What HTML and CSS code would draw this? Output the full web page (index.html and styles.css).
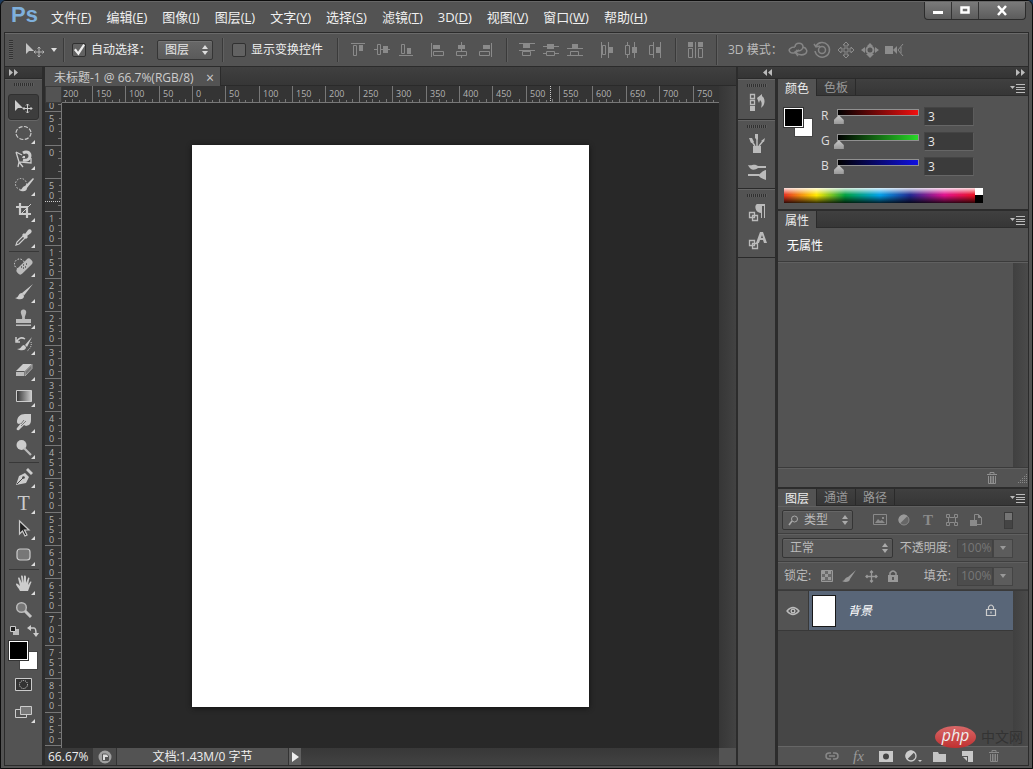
FILE: index.html
```html
<!DOCTYPE html>
<html lang="zh-CN">
<head>
<meta charset="utf-8">
<title>未标题-1 @ 66.7%(RGB/8)</title>
<link rel="stylesheet" href="styles.css">
</head>
<body>
<header class="titlebar">
  <span class="logo">Ps</span>
  <nav class="menu">
    <button>文件(<u>F</u>)</button><button>编辑(<u>E</u>)</button><button>图像(<u>I</u>)</button><button>图层(<u>L</u>)</button><button>文字(<u>Y</u>)</button><button>选择(<u>S</u>)</button><button>滤镜(<u>T</u>)</button><button>3D(<u>D</u>)</button><button>视图(<u>V</u>)</button><button>窗口(<u>W</u>)</button><button>帮助(<u>H</u>)</button>
  </nav>
  <div class="winctl">
    <button aria-label="最小化"><svg width="12" height="12"><path d="M1 6h10v3H1z" fill="#fff"/></svg></button>
    <button aria-label="最大化"><svg width="12" height="12"><path d="M2.500 2.500h7v5h-7z" fill="none" stroke="#fff" stroke-width="2.500"/></svg></button>
    <button class="close" aria-label="关闭"><svg width="12" height="12"><path d="M2 1l8 9M10 1L2 10" stroke="#fff" stroke-width="2.500"/></svg></button>
  </div>
</header>

<main class="frame">
  <section class="options">
    <i class="grip-v"></i>
    <button class="current-tool" aria-label="移动工具">
      <svg width="22" height="18" viewBox="0 0 22 18"><path d="M2 2v11l3-3 5 0z" fill="#c4c4c4"/><path d="M15 6v10M10 11h10M13.500 7.500L15 6l1.500 1.500M13.500 14.500L15 16l1.500-1.500M11.500 9.500L10 11l1.500 1.500M18.500 9.500L20 11l-1.500 1.500" fill="none" stroke="#b4b4b4"/></svg>
      <svg width="8" height="5"><path d="M1 0h6L4 4z" fill="#ddd"/></svg>
    </button>
    <i class="sep"></i>
    <label class="check"><input type="checkbox" checked>自动选择：</label>
    <span class="drop auto-target"><select aria-label="自动选择对象"><option>图层</option></select><svg width="8" height="12"><path d="M1 5l3-4 3 4zM1 7l3 4 3-4z" fill="#ddd"/></svg></span>
    <i class="sep"></i>
    <label class="check transform"><input type="checkbox">显示变换控件</label>
    <i class="sep"></i>
    <div class="group">
      <button aria-label="顶对齐"><svg class="al" viewBox="0 0 16 16"><path d="M1 1.500h14M3.500 3.500h3v10h-3z"/><path class="f" d="M9 3h4v6H9z"/></svg></button>
      <button aria-label="垂直居中对齐"><svg class="al" viewBox="0 0 16 16"><path d="M0 7.500h3M7 7.500h9M3.500 2.500h3v10h-3z"/><path class="f" d="M9 4h5v7H9z"/></svg></button>
      <button aria-label="底对齐"><svg class="al" viewBox="0 0 16 16"><path d="M1 13.500h14M3.500 2.500h3v9h-3z"/><path class="f" d="M9 6h4v6H9z"/></svg></button>
    </div>
    <div class="group">
      <button aria-label="左对齐"><svg class="al" viewBox="0 0 16 16"><path d="M1.500 1v14M3.500 9.500h10v4h-10z"/><path class="f" d="M3 3h7v4H3z"/></svg></button>
      <button aria-label="水平居中对齐"><svg class="al" viewBox="0 0 16 16"><path d="M7.500 0v3M7.500 7v2M7.500 13v3M2.500 9.500h10v4h-10z"/><path class="f" d="M4 3h7v4H4z"/></svg></button>
      <button aria-label="右对齐"><svg class="al" viewBox="0 0 16 16"><path d="M13.500 1v14M1.500 9.500h10v4h-10z"/><path class="f" d="M5 3h7v4H5z"/></svg></button>
    </div>
    <i class="sep"></i>
    <div class="group">
      <button aria-label="按顶分布"><svg class="al" viewBox="0 0 16 16"><path d="M0 1.500h16M0 8.500h16M3.500 9.500h8v4h-8z"/><path class="f" d="M4 2h7v4H4z"/></svg></button>
      <button aria-label="按垂直居中分布"><svg class="al" viewBox="0 0 16 16"><path d="M0 4.500h16M0 11.500h3M12 11.500h4M3.500 9.500h8v4h-8z"/><path class="f" d="M4 2h7v5H4z"/></svg></button>
      <button aria-label="按底分布"><svg class="al" viewBox="0 0 16 16"><path d="M0 6.500h16M0 13.500h16M3.500 9.500h8v4h-8z"/><path class="f" d="M5 2h6v4H5z"/></svg></button>
    </div>
    <div class="group">
      <button aria-label="按左分布"><svg class="al" viewBox="0 0 16 16"><path d="M2.500 0v16M9.500 0v16M3.500 3.500h3v9h-3z"/><path class="f" d="M10 5h4v6h-4z"/></svg></button>
      <button aria-label="按水平居中分布"><svg class="al" viewBox="0 0 16 16"><path d="M4.500 0v3M4.500 13v3M11.500 0v16M2.500 3.500h4v9h-4z"/><path class="f" d="M9 5h5v6H9z"/></svg></button>
      <button aria-label="按右分布"><svg class="al" viewBox="0 0 16 16"><path d="M6.500 0v16M13.500 0v16M2.500 3.500h4v9h-4z"/><path class="f" d="M9 5h4v6H9z"/></svg></button>
    </div>
    <i class="sep"></i>
    <button class="auto-align" aria-label="自动对齐图层"><svg class="al" viewBox="0 0 16 16"><path d="M7.500 0v16M.5 6.500h4v9h-4zM10.500 6.500h4v9h-4z"/><path class="f" d="M0 0h5v5H0zM10 0h5v5h-5z"/></svg></button>
    <i class="sep tall"></i>
    <span class="mode">3D 模式：</span>
    <div class="group threed">
      <button aria-label="旋转 3D"><svg width="20" height="16" viewBox="0 0 20 16"><g fill="none" stroke="#858585" stroke-width="1.500"><path d="M7 5C2 5 0 8 2 10s6 1 8-1M7 5c0-5 8-5 8 0 0 3-4 5-7 3M15 5c4 1 5 5 2 7-2 1-6 1-9-1"/><path d="M11 8l-4 2 3 4"/></g></svg></button>
      <button aria-label="滚动 3D"><svg width="18" height="18" viewBox="0 0 18 18"><g fill="none" stroke="#858585" stroke-width="1.500"><path d="M3 5a7.300 7.300 0 1 1-1 5M1 3l2 3 4-1"/><circle cx="9" cy="9" r="3.500"/></g></svg></button>
      <button aria-label="拖动 3D"><svg width="18" height="18" viewBox="0 0 18 18"><path d="M9 1l3 3h-2v4h4V6l3 3-3 3v-2h-4v4h2l-3 3-3-3h2v-4H4v2L1 9l3-3v2h4V4H6z" fill="none" stroke="#8c8c8c"/></svg></button>
      <button aria-label="滑动 3D"><svg width="18" height="18" viewBox="0 0 18 18"><path d="M9 2l3 3H6zM0 9l4-3v6zM18 9l-4-3v6zM9 17l-4-4h8z" fill="#8c8c8c"/><circle cx="9" cy="9" r="3.500" fill="none" stroke="#8c8c8c" stroke-width="2"/></svg></button>
      <button aria-label="缩放 3D"><svg width="20" height="14" viewBox="0 0 20 14"><path d="M1 3h8v8H1zM9 7l4-4v8z" fill="#8c8c8c"/><path d="M19 1l-5 6 5 6M17 4v6" fill="none" stroke="#8c8c8c"/></svg></button>
    </div>
  </section>

  <section class="workspace">
    <aside class="tools">
      <div class="dock-head"><button aria-label="展开工具栏"><svg width="9" height="7"><path d="M0 0l4 3.500L0 7zM5 0l4 3.500L5 7z" fill="#bbb"/></svg></button></div>
      <div class="tools-body">
        <i class="grip-h"></i>
        <button class="tool active" aria-label="移动"><svg viewBox="0 0 20 20"><path d="M1 3v11l3-3 5 0z" fill="#ccc"/><path d="M13.500 7v9M9 11.500h9M12 8.500L13.500 7 15 8.500M12 14.500l1.500 1.500 1.500-1.500M10.500 10L9 11.500l1.500 1.500M16.500 10l1.500 1.500-1.500 1.500" fill="none" stroke="#ccc"/></svg></button>
        <button class="tool more" aria-label="椭圆选框"><svg viewBox="0 0 20 20"><ellipse cx="9.500" cy="10" rx="7.500" ry="6.500" fill="none" stroke="#ccc" stroke-width="1.200" stroke-dasharray="4 1.500"/></svg></button>
        <button class="tool more" aria-label="磁性套索"><svg viewBox="0 0 20 20"><path d="M2 3l3 10 12 1V9M2 3l6 3M5 13l-1 5M5 13l4 5" fill="none" stroke="#ccc" stroke-width="1.300"/><path d="M9 4c3-2 7-1 7 3 0 3-3 5-7 4" fill="none" stroke="#ccc" stroke-width="3"/><path d="M9 7h2v2H8z" fill="#ccc"/></svg></button>
        <button class="tool more" aria-label="快速选择"><svg viewBox="0 0 20 20"><circle cx="7" cy="9" r="5.500" fill="none" stroke="#ccc" stroke-dasharray="1.500 1.500"/><path d="M19 3l-8 8 2 2 7-9zM11 11c-3 0-2 4-6 4 3 2 8 2 8-2z" fill="#ccc"/></svg></button>
        <button class="tool more" aria-label="裁剪"><svg viewBox="0 0 20 20"><path d="M6 2v11h11M2 6h11v11" fill="none" stroke="#ccc" stroke-width="2.200"/><path d="M6 14L17 3" stroke="#ccc"/></svg></button>
        <button class="tool more" aria-label="吸管"><svg viewBox="0 0 20 20"><path d="M9 9l2 2-6 6-3 1 1-3z" fill="none" stroke="#ccc" stroke-width="1.200"/><path d="M8 8l2-2 1 1 3-4c2-2 5 1 3 3l-4 3 1 1-2 2z" fill="#ccc"/></svg></button>
        <hr>
        <button class="tool more" aria-label="污点修复画笔"><svg viewBox="0 0 20 20"><circle cx="5.500" cy="8" r="5" fill="none" stroke="#ddd" stroke-dasharray="1.500 1.500"/><rect x="1" y="7" width="19" height="7" rx="3" transform="rotate(-45 10.500 10.500)" fill="#bbb"/><path d="M9 9h1M11 11h1M9 12h1M12 8h1M7 11h1" stroke="#555" stroke-width="1.300"/></svg></button>
        <button class="tool more" aria-label="画笔"><svg viewBox="0 0 20 20"><path d="M19 2L8 11l2 2.500zM8 11c-4 0-3 5-7 5 4 2 9 2 9-2z" fill="#ccc"/></svg></button>
        <button class="tool more" aria-label="仿制图章"><svg viewBox="0 0 20 20"><path d="M8 11c1-3-2-5-1-8 1-2 4-2 5 0 1 3-2 5-1 8h6v4H2v-4zM2 16.500h15v1.500H2z" fill="#bbb"/></svg></button>
        <button class="tool more" aria-label="历史记录画笔"><svg viewBox="0 0 20 20"><path d="M18 3l-7 8 2 2zM10 11c-3 0-2 4-7 4 4 2 9 2 9-2z" fill="#ccc"/><path d="M11 5C8 3 5 4 3 7M2 3v5h4" fill="none" stroke="#ccc" stroke-width="1.500"/><path d="M17 8c1 4-1 7-4 9" fill="none" stroke="#ccc" stroke-dasharray="1 1"/></svg></button>
        <button class="tool more" aria-label="橡皮擦"><svg viewBox="0 0 20 20"><path d="M9 4h9l-7 7H2z" fill="#ccc"/><path d="M2 12h8v4H2z" fill="#bbb"/><path d="M11 11.500l7-7v4L11 16z" fill="#777" stroke="#aaa"/></svg></button>
        <button class="tool more" aria-label="渐变"><svg viewBox="0 0 20 20"><defs><linearGradient id="gt"><stop stop-color="#333"/><stop offset="1" stop-color="#ccc"/></linearGradient></defs><path d="M2.500 4.500h15v11h-15z" fill="url(#gt)" stroke="#ccc"/></svg></button>
        <button class="tool more" aria-label="涂抹"><svg viewBox="0 0 20 20"><path d="M3 10c0-5 3-8 8-8h6v6c0 3-1 4-2 5l-3 1-2-1-5 5c-2 1-3-1-2-2l4-5-2 1c-1 0-2-1-2-2z" fill="#ccc"/><path d="M12 9l-5 5M10 8l-3 4" stroke="#777"/></svg></button>
        <button class="tool more" aria-label="减淡"><svg viewBox="0 0 20 20"><circle cx="7.500" cy="7" r="5" fill="#ccc"/><path d="M10 10l7 7" stroke="#bbb" stroke-width="2.200"/></svg></button>
        <hr>
        <button class="tool more" aria-label="钢笔"><svg viewBox="0 0 20 20"><path d="M2 18l3-9 6-3 4 4-3 6zM12 3l2-2 5 5-2 2z" fill="#ccc"/><path d="M3 17l6-6" stroke="#444"/><circle cx="9.500" cy="10.500" r="1.300" fill="#444"/></svg></button>
        <button class="tool more type" aria-label="文字">T</button>
        <button class="tool more" aria-label="路径选择"><svg viewBox="0 0 20 20"><path d="M5.500 2v13l3-3 2.500 5 2-1-2.500-5H15z" fill="#222" stroke="#ccc" stroke-width="1.200"/></svg></button>
        <button class="tool more" aria-label="圆角矩形"><svg viewBox="0 0 20 20"><rect x="3" y="4" width="13" height="11" rx="3" fill="#777" stroke="#ccc" stroke-width="1.200"/></svg></button>
        <hr>
        <button class="tool more" aria-label="抓手"><svg viewBox="0 0 20 20"><path d="M6 17c-1-3-4-5-4-7 1-1 2 0 4 2L4 4c1-1 2 0 2 1l2 4-1-7c1-1 2 0 2 1l1 6V2c1-1 2 0 2 1v6l2-5c1-1 2 0 1 2l-1 5 2-3c1-1 2 0 1 1l-3 8z" fill="#ccc"/></svg></button>
        <button class="tool" aria-label="缩放"><svg viewBox="0 0 20 20"><circle cx="7.500" cy="7.500" r="4.800" fill="#777" stroke="#bbb" stroke-width="1.500"/><path d="M11 11l6 6" stroke="#c4c4c4" stroke-width="3"/></svg></button>
        <div class="mini">
          <button aria-label="默认颜色"><svg width="11" height="11"><path d="M4 4h6v6H4z" fill="#bbb"/><path d="M1.500 1.500h5v5h-5z" fill="#222" stroke="#ccc"/></svg></button>
          <button aria-label="切换颜色"><svg width="12" height="12"><path d="M3 3h4q2 0 2 6" fill="none" stroke="#ccc" stroke-width="1.500"/><path d="M4 0v6L0 3zM6 8h6l-3 4z" fill="#ccc"/></svg></button>
        </div>
        <div class="swatches"><button class="bg" aria-label="背景色"></button><button class="fg" aria-label="前景色"></button></div>
        <button class="tool mask" aria-label="快速蒙版"><svg viewBox="0 0 20 20"><path d="M1.500 4.500h16v12h-16z" fill="#333" stroke="#ccc"/><circle cx="9.500" cy="10.500" r="4" fill="none" stroke="#ddd" stroke-dasharray="1 1"/></svg></button>
        <button class="tool more" aria-label="屏幕模式"><svg viewBox="0 0 20 20"><path d="M1.500 7.500h11v8h-11z" fill="none" stroke="#ccc"/><path d="M6.500 4.500h11v8h-11z" fill="#777" stroke="#ccc"/></svg></button>
      </div>
    </aside>

    <section class="document">
      <div class="tabs"><div class="doc-tab">未标题-1 @ 66.7%(RGB/8)<button aria-label="关闭文档">×</button></div></div>
      <div class="view">
        <div class="corner"></div>
        <svg class="ruler-x" id="rulerX"></svg>
        <svg class="ruler-y" id="rulerY"></svg>
        <div class="canvas"><div class="page"></div></div>
        <div class="vscroll"></div>
      </div>
      <footer class="status">
        <input class="zoom" value="66.67%" aria-label="缩放比例">
        <button class="share" aria-label="分享"><svg width="14" height="14"><circle cx="7" cy="7" r="6.500" fill="#a0a0a0"/><path d="M4.500 10.500V4h4l2 2v4.500z" fill="#ddd" stroke="#555"/><path d="M7 7h3v3H7z" fill="#555"/></svg></button>
        <span class="info">文档:1.43M/0 字节</span>
        <button class="play" aria-label="状态菜单"><svg width="7" height="10"><path d="M0 0l7 5-7 5z" fill="#eee"/></svg></button>
        <div class="hscroll"></div><div class="size-box"></div>
      </footer>
    </section>

    <aside class="dock">
      <div class="dock-head split">
        <button aria-label="展开面板"><svg width="9" height="7"><path d="M4 0L0 3.500 4 7zM9 0L5 3.500 9 7z" fill="#bbb"/></svg></button>
        <button aria-label="折叠面板"><svg width="9" height="7"><path d="M0 0l4 3.500L0 7zM5 0l4 3.500L5 7z" fill="#bbb"/></svg></button>
      </div>
      <div class="dock-row">
        <div class="rail">
          <div class="rail-group"><i class="grip-h"></i>
            <button aria-label="历史记录"><svg viewBox="0 0 20 20"><path d="M3.500 1.500h4v4h-4zM3.500 7.500h4v4h-4z" fill="none" stroke="#bbb" stroke-width="1.300"/><path d="M3 13h5v5H3zM10 5l5-4v2c4 3 3 9-1 12 1-4 1-6-1-8l-1 3z" fill="#bbb"/></svg></button></div>
          <div class="rail-group two"><i class="grip-h"></i>
            <button aria-label="画笔预设"><svg viewBox="0 0 20 20"><path d="M6 12h8v7H6z" fill="#bbb"/><path d="M8 12L4 6M10 12V5M12 12l4-5" stroke="#bbb" stroke-width="1.500"/><path d="M2 4l3 0 2 4-3 1zM8 0h3v5l-1 1-2-2zM18 4l-1 4-3-1z" fill="#bbb"/></svg></button>
            <button aria-label="画笔"><svg viewBox="0 0 20 20"><path d="M8 5h11M1 13h11" stroke="#bbb" stroke-width="2"/><path d="M1 3c4 1 5-1 8 0l2 1v2c-4 3-8 2-10-3zM19 8v10c-3-1-6-2-8-5 3-1 5-5 8-5z" fill="#bbb"/></svg></button></div>
          <div class="rail-group two"><i class="grip-h"></i>
            <button aria-label="段落样式"><svg viewBox="0 0 20 20"><path d="M10 1h8v14h-1V3h-2v12h-1v-5c-6 0-7-8-4-9z" fill="#bbb"/><path d="M2.500 9.500h5v5h-5zM5.500 12.500h5v5h-5z" fill="#555" stroke="#bbb" stroke-width="1.300"/></svg></button>
            <button aria-label="字符样式"><svg viewBox="0 0 20 20"><path d="M9 12l4-11h3l4 11h-3l-1-3h-3l-1 3zm5-5h2l-1-3z" fill="#bbb"/><path d="M2.500 9.500h5v5h-5zM5.500 12.500h5v5h-5z" fill="#555" stroke="#bbb" stroke-width="1.300"/></svg></button></div>
        </div>

        <div class="panels">
          <section class="panel color">
            <div class="ptabs"><button class="on">颜色</button><button>色板</button><button class="pmenu" aria-label="面板菜单"><svg width="15" height="9"><path d="M0 2h5L2.500 5z" fill="#bbb"/><path d="M6 .5h9M6 3.500h9M6 5.500h9M6 8.500h9" stroke="#bbb"/></svg></button></div>
            <div class="color-body">
              <div class="swatches"><button class="bg" aria-label="背景色"></button><button class="fg" aria-label="前景色"></button></div>
              <div class="channels">
                <label for="r">R</label><input class="red" type="range" max="255" value="3" aria-label="R 滑块"><input id="r" type="text" value="3">
                <label for="g">G</label><input class="green" type="range" max="255" value="3" aria-label="G 滑块"><input id="g" type="text" value="3">
                <label for="b">B</label><input class="blue" type="range" max="255" value="3" aria-label="B 滑块"><input id="b" type="text" value="3">
              </div>
            </div>
            <div class="ramp"><div class="spectrum"></div><div class="bw"></div></div>
          </section>

          <section class="panel props">
            <div class="ptabs"><button class="on">属性</button><button class="pmenu" aria-label="面板菜单"><svg width="15" height="9"><path d="M0 2h5L2.500 5z" fill="#bbb"/><path d="M6 .5h9M6 3.500h9M6 5.500h9M6 8.500h9" stroke="#bbb"/></svg></button></div>
            <div class="props-title">无属性</div>
            <div class="props-body"><div></div><div class="pscroll"></div></div>
            <div class="props-foot"><button aria-label="删除"><svg width="12" height="12"><path d="M1 2.500h10M4 2V.5h4V2M2.500 4v7.500h7V4M4.500 4v7M6 4v7M7.500 4v7" fill="none" stroke="#909090"/></svg></button><svg width="11" height="11"><path d="M9.500 1v10M7.500 3v8M5.500 5v6M3.500 7v4M1.500 9v2" stroke="#888" stroke-dasharray="1 1"/></svg></div>
          </section>

          <section class="panel layers">
            <div class="ptabs"><button class="on">图层</button><button>通道</button><button>路径</button><button class="pmenu" aria-label="面板菜单"><svg width="15" height="9"><path d="M0 2h5L2.500 5z" fill="#bbb"/><path d="M6 .5h9M6 3.500h9M6 5.500h9M6 8.500h9" stroke="#bbb"/></svg></button></div>
            <div class="lrow filter">
              <span class="drop kind"><svg class="lens" width="11" height="11"><circle cx="6.500" cy="4" r="3" fill="none" stroke="#aaa"/><path d="M4 6L1 10" stroke="#aaa" stroke-width="1.500"/></svg><select aria-label="筛选类型"><option>类型</option></select><svg width="8" height="12"><path d="M1 5l3-4 3 4zM1 7l3 4 3-4z" fill="#aaa"/></svg></span>
              <div class="filters">
                <button aria-label="像素图层"><svg width="14" height="12"><path d="M.5.500h13v10H.5z" fill="none" stroke="#8a8a8a"/><path d="M2 9l3-4 2 2 2-1 3 3z" fill="#8a8a8a"/><path d="M9 3h2v2H9z" fill="#8a8a8a"/></svg></button>
                <button aria-label="调整图层"><svg width="12" height="12"><circle cx="6" cy="6" r="5" fill="#666" stroke="#8a8a8a"/><path d="M2 9.500A5.300 5.300 0 0 1 9.500 2z" fill="#999"/></svg></button>
                <button class="tf" aria-label="文字图层">T</button>
                <button aria-label="形状图层"><svg width="12" height="12"><path d="M2.500 1v10M9.500 1v10M1 1.500h3M8 1.500h3M1 10.500h3M8 10.500h3M4 3.500h4M4 8.500h4" fill="none" stroke="#8a8a8a"/><path d="M.5.500h3v3h-3zM8.500.500h3v3h-3zM.5 8.500h3v3h-3zM8.500 8.500h3v3h-3z" fill="#555" stroke="#8a8a8a"/></svg></button>
                <button aria-label="智能对象"><svg width="12" height="13"><path d="M4.500.500h4l3 3v7h-7z" fill="none" stroke="#8a8a8a"/><path d="M8 0v4h4zM0 6h7v6H0z" fill="#8a8a8a"/></svg></button>
              </div>
              <button class="toggle" aria-label="打开或关闭筛选"></button>
            </div>
            <div class="lrow">
              <span class="drop blend"><select aria-label="混合模式"><option>正常</option></select><svg width="8" height="12"><path d="M1 5l3-4 3 4zM1 7l3 4 3-4z" fill="#aaa"/></svg></span>
              <label class="push" for="op">不透明度:</label>
              <span class="pct"><input id="op" value="100%" disabled><button aria-label="不透明度滑块"><svg width="8" height="5"><path d="M1 0h6L4 4z" fill="#999"/></svg></button></span>
            </div>
            <div class="lrow">
              <span class="lock">锁定:</span>
              <div class="locks">
                <button aria-label="锁定透明像素"><svg width="12" height="12"><path d="M.5.500h11v11H.5z" fill="#6a6a6a" stroke="#999"/><path d="M1 1h3v3H1zM7 1h3v3H7zM4 4h3v3H4zM1 7h3v3H1zM7 7h3v3H7z" fill="#999"/></svg></button>
                <button aria-label="锁定图像像素"><svg width="16" height="14"><path d="M15 1L7 8l2 2zM7 8c-3 0-3 4-6 4 3 2 8 1 8-2z" fill="#999"/></svg></button>
                <button aria-label="锁定位置"><svg width="13" height="13"><path d="M6.500 1v11M1 6.500h11M5 2.500L6.500 1 8 2.500M5 10.500L6.500 12 8 10.500M2.500 5L1 6.500 2.500 8M10.500 5L12 6.500 10.500 8" fill="none" stroke="#999" stroke-width="1.300"/></svg></button>
                <button aria-label="锁定全部"><svg width="10" height="12"><path d="M0 5h10v7H0z" fill="#999"/><path d="M2 5V3q3-4 6 0v2" fill="none" stroke="#999" stroke-width="1.500"/><path d="M5 7v3" stroke="#444" stroke-width="1.500"/></svg></button>
              </div>
              <label class="push" for="fill">填充:</label>
              <span class="pct"><input id="fill" value="100%" disabled><button aria-label="填充滑块"><svg width="8" height="5"><path d="M1 0h6L4 4z" fill="#999"/></svg></button></span>
            </div>
            <div class="list">
              <div class="items">
                <div class="layer">
                  <button class="eye" aria-label="可见性"><svg width="14" height="10"><path d="M1 5q6-7 12 0-6 7-12 0z" fill="#555" stroke="#bbb" stroke-width="1.300"/><circle cx="7" cy="5" r="2.500" fill="#bbb"/><circle cx="7" cy="5" r="1" fill="#333"/></svg></button>
                  <div class="layer-main"><span class="thumb"></span><span class="name">背景</span><svg width="12" height="13"><path d="M1.500 5.500h9v6h-9zM3.500 5V3q2.500-4 5 0v2M6 7.500v2" fill="none" stroke="#ccc" stroke-width="1.200"/></svg></div>
                </div>
              </div>
              <div class="pscroll"></div>
            </div>
            <div class="lfoot">
              <button aria-label="链接图层"><svg width="14" height="10"><path d="M6 2H4a3 3 0 0 0 0 6h2M8 2h2a3 3 0 0 1 0 6H8M4 5h6" fill="none" stroke="#888" stroke-width="1.500"/></svg></button>
              <button class="fx" aria-label="图层样式">fx</button>
              <button aria-label="添加蒙版"><svg width="14" height="11"><path d="M0 0h14v11H0z" fill="#c8c8c8"/><circle cx="7" cy="5.500" r="3" fill="#444"/></svg></button>
              <button aria-label="新建调整图层"><svg width="18" height="13"><circle cx="7" cy="6" r="5" fill="#555" stroke="#ccc" stroke-width="1.300"/><path d="M3 9.500A5.300 5.300 0 0 1 10.500 2z" fill="#ccc"/><path d="M14 10h4l-2 2z" fill="#ccc"/></svg></button>
              <button aria-label="新建组"><svg width="13" height="11"><path d="M0 1h5l1 2h7v8H0z" fill="#c4c4c4"/></svg></button>
              <button aria-label="新建图层"><svg width="12" height="12"><path d="M1 1h11v11H7V6H1z" fill="#c8c8c8"/><path d="M2 7h4v4z" fill="#c8c8c8"/></svg></button>
              <button aria-label="删除图层"><svg width="12" height="12"><path d="M1 2.500h10M4 2V.5h4V2M2.500 4v7.500h7V4M4.500 4v7M6 4v7M7.500 4v7" fill="none" stroke="#888"/></svg></button>
            </div>
          </section>
        </div>
      </div>
    </aside>
  </section>
</main>
<div class="mark"><span class="php">php</span><span class="cn">中文网</span></div>
<script src="rulers.js"></script>
</body>
</html>
```
FILE: styles.css
```css
* { box-sizing: border-box; }
html { background: #1d3a5c; }
body {
  margin: 0; height: 100vh; overflow: hidden; position: relative;
  display: flex; flex-direction: column;
  border: 1px solid #0c0c0c; border-radius: 6px 6px 0 0;
  background: #535353; color: #e6e6e6;
  font: 12px/16px "Open Sans", "Noto Sans CJK SC", sans-serif;
}
button, input, select { font: inherit; color: inherit; margin: 0; padding: 0; border: 0; background: none; border-radius: 0; }
button { display: flex; align-items: center; justify-content: center; flex: none; }
svg { display: block; flex: none; }
select { appearance: none; outline: 0; }

.titlebar { display: flex; height: 31px; flex: none; align-items: center; border-top: 1px solid #666; padding-left: 10px; }
.logo { width: 35px; font: bold 22px/26px "Liberation Sans", sans-serif; color: #7fb0dc; padding-bottom: 4px; }
.menu { display: flex; gap: 15px; margin-left: 5px; font-size: 13px; color: #f0f0f0; }
.winctl { display: flex; align-self: flex-start; margin: 0 6px 0 auto; border: 1px solid #2c2c2c; border-top: 0; border-radius: 0 0 4px 4px; background: linear-gradient(#7a7a7a, #5c5c5c); }
.winctl button { width: 27px; height: 17px; border-right: 1px solid #333; }
.winctl .close { width: 46px; border: 0; }

.frame { flex: 1; min-height: 0; margin: 0 3px 2px; border: 1px solid #2b2b2b; display: flex; flex-direction: column; }
.options { display: flex; flex: none; align-items: center; height: 34px; border-top: 1px solid #6a6a6a; border-bottom: 1px solid #2b2b2b; padding-left: 4px; }
.grip-v { width: 4px; height: 20px; background: repeating-linear-gradient(#333 0 1px, #5e5e5e 1px 2px); margin-right: 11px; }
.current-tool { gap: 4px; margin-right: 5px; }
.sep { width: 2px; height: 24px; border-left: 1px solid #3a3a3a; border-right: 1px solid #606060; flex: none; }
.sep.tall { height: 30px; margin: 0 10px 0 8px; }
.check { display: flex; align-items: center; gap: 5px; white-space: nowrap; flex: none; margin-left: 7px; width: 86px; color: #eee; }
.check.transform { width: 97px; margin: 0 8px; }
.check input { appearance: none; width: 14px; height: 14px; border: 1px solid #303030; border-radius: 2px; background: #626262; flex: none; display: grid; }
.check input:checked::after { content: ""; background: #eee; clip-path: polygon(8% 50%, 24% 38%, 42% 65%, 86% 0, 100% 10%, 46% 96%); }
.drop { display: grid; align-items: center; border: 1px solid #353535; border-radius: 2px; background: linear-gradient(#686868, #5a5a5a); box-shadow: inset 0 1px #747474; height: 20px; flex: none; }
.drop > * { grid-area: 1 / 1; }
.drop select { width: 100%; height: 18px; padding-left: 7px; }
.drop svg { justify-self: end; margin-right: 3px; pointer-events: none; }
.drop .lens { justify-self: start; margin-left: 5px; }
.auto-target { width: 56px; margin: 0 9px 0 -1px; }
.group { display: flex; margin-left: 8px; }
.group button, .auto-align { width: 24px; height: 24px; }
.options > .group + .sep { margin-left: 8px; }
.sep + .group, .auto-align { margin-left: 7px; }
.al { width: 16px; height: 16px; fill: none; stroke: #8a8a8a; }
.al .f { fill: #8a8a8a; stroke: none; }
.mode { width: 50px; white-space: nowrap; color: #bbb; }

.workspace { flex: 1; min-height: 0; display: flex; background: #2c2c2c; }
.tools { width: 37px; margin-right: 3px; display: flex; flex-direction: column; flex: none; }
.dock-head { height: 12px; flex: none; display: flex; align-items: center; padding: 0 4px; background: linear-gradient(#3c3c3c, #343434); border-bottom: 1px solid #2a2a2a; }
.dock-head.split { justify-content: space-between; padding: 0 3px 0 25px; }
.tools-body { flex: 1; background: #535353; display: flex; flex-direction: column; align-items: center; border-top: 1px solid #606060; }
.grip-h { width: 20px; height: 3px; flex: none; background: repeating-linear-gradient(90deg, #303030 0 1px, #5e5e5e 1px 2px); }
.tools-body .grip-h { margin: 3px 0 8px; }
.tool { width: 31px; height: 26px; position: relative; }
.tool svg { width: 20px; height: 20px; }
.tool.active { background: #3d3d3d; border: 1px solid #303030; border-radius: 3px; box-shadow: 0 1px #666; }
.tool.more::after { content: ""; position: absolute; right: 4px; bottom: 2px; width: 4px; height: 4px; background: #ddd; clip-path: polygon(100% 0, 100% 100%, 0 100%); }
.tool.type { font: 20px/24px "Liberation Serif", serif; color: #ccc; }
.tools-body hr { width: 30px; height: 1px; margin: 1px 0; border: 0; background: #383838; flex: none; }
.mini { width: 30px; display: flex; justify-content: space-between; height: 15px; align-items: center; }
.swatches { display: grid; width: 29px; height: 29px; margin: 3px 0 0; }
.swatches button { grid-area: 1 / 1; width: 19px; height: 19px; border: 1px solid #444; }
.swatches .bg { background: #fff; justify-self: end; align-self: end; }
.swatches .fg { background: #000; border: 1px solid #fff; outline: 1px solid #333; }
.tool.mask { margin: 1px 0 2px; }

.document { flex: 1; min-width: 0; display: flex; flex-direction: column; margin-right: 2px; }
.tabs { height: 19px; flex: none; background: linear-gradient(#404040, #363636); border-bottom: 1px solid #2a2a2a; display: flex; }
.doc-tab { display: flex; justify-content: space-between; align-items: center; width: 176px; height: 19px; padding: 2px 6px 0 9px; background: #535353; border-right: 1px solid #2b2b2b; color: #ccc; white-space: nowrap; }
.doc-tab button { font-size: 14px; }
.view { flex: 1; min-height: 0; display: grid; grid-template: 17px minmax(0, 1fr) / 17px minmax(0, 1fr) 17px; background: #282828; }
.corner { background: #535353; border: 1px solid #3a3a3a; }
.ruler-x, .ruler-y { width: 100%; height: 100%; overflow: hidden; background: #343434; shape-rendering: crispEdges; }
.ruler-x line, .ruler-y line { stroke: #777; }
.ruler-x line.here, .ruler-y line.here { stroke: #ccc; stroke-dasharray: 1 1; }
.ruler-x text, .ruler-y text { fill: #b2b2b2; font: 9px "Open Sans", sans-serif; }
.ruler-x { grid-area: 1 / 2; }
.ruler-y { grid-area: 2 / 1; }
.canvas { grid-area: 2 / 2; display: flex; align-items: center; justify-content: center; overflow: hidden; }
.page { width: 397px; height: 562px; background: #fff; box-shadow: 0 1px 5px #111; flex: none; }
.vscroll { grid-area: 1 / 3 / 3 / 4; background: linear-gradient(90deg, #363636, #424242); }
.status { height: 17px; flex: none; display: flex; align-items: stretch; background: #3b3b3b; }
.zoom { width: 48px; padding-left: 3px; color: #eee; background: #383838; }
.share { width: 24px; background: #4b4b4b; border-right: 1px solid #333; }
.info { width: 171px; text-align: center; background: #535353; color: #eee; white-space: nowrap; line-height: 17px; }
.play { width: 13px; background: #606060; border-left: 1px solid #333; }
.hscroll { flex: 1; background: linear-gradient(#383838, #424242); }
.size-box { width: 17px; background: #535353; }

.dock { width: 290px; flex: none; display: flex; flex-direction: column; }
.dock-row { flex: 1; min-height: 0; display: flex; gap: 3px; }
.rail { width: 37px; flex: none; background: #535353; }
.rail-group { display: flex; flex-direction: column; align-items: center; height: 41px; padding-top: 4px; border-top: 1px solid #666; border-bottom: 1px solid #2a2a2a; }
.rail-group.two { height: 69px; }
.rail-group button { width: 30px; height: 28px; }
.rail-group svg { width: 20px; height: 20px; }
.rail-group .grip-h { margin-bottom: 2px; }
.panels { flex: 1; min-width: 0; display: flex; flex-direction: column; gap: 2px; }
.panel { background: #535353; display: flex; flex-direction: column; }
.ptabs { height: 17px; flex: none; display: flex; background: linear-gradient(#404040, #363636); border-bottom: 1px solid #2c2c2c; color: #999; }
.ptabs button { width: 39px; height: 16px; padding-top: 2px; border-right: 1px solid #2a2a2a; }
.ptabs .on { height: 17px; background: #535353; color: #eee; }
.ptabs .pmenu { margin-left: auto; width: 22px; border: 0; }
.color { height: 130px; flex: none; }
.color-body { display: flex; padding: 12px 0 0 6px; }
.color .swatches { margin: 0; flex: none; }
.channels { display: grid; grid-template-columns: 16px 82px 50px; grid-auto-rows: 19px; row-gap: 6px; margin: -1px 0 0 8px; }
.channels label { font-size: 12px; color: #ddd; line-height: 17px; }
.channels input[type=text] { width: 50px; margin-left: 5px; padding-left: 3px; height: 19px; background: #3b3b3b; border: 1px solid #444; border-bottom-color: #666; border-right-color: #5c5c5c; }
.channels input[type=range] { appearance: none; width: 82px; height: 17px; }
.channels input::-webkit-slider-runnable-track { height: 7px; margin-top: -6px; border: 1px solid #909090; background: var(--ramp); }
.channels input::-webkit-slider-thumb { appearance: none; width: 10px; height: 9px; margin: 5px 0 0 -5px; background: linear-gradient(#c8c8c8, #999); clip-path: polygon(50% 0, 100% 55%, 100% 100%, 0 100%, 0 55%); }
.red { --ramp: linear-gradient(90deg, #000, #f01010); }
.green { --ramp: linear-gradient(90deg, #000, #28d828); }
.blue { --ramp: linear-gradient(90deg, #000, #1010e0); }
.ramp { display: flex; width: 199px; height: 15px; margin: 12px 0 0 6px; }
.spectrum { flex: 1; background: linear-gradient(#fffd, #fff0 45%, #0000 50%, #000c), linear-gradient(90deg, #e83020, #ffe800 17%, #00a040 32%, #00a0e8 50%, #202890 66%, #e0108c 84%, #e81020); }
.bw { width: 8px; background: linear-gradient(#fff 50%, #000 50%); }

.props { flex: 1; min-height: 0; }
.props-title { height: 34px; flex: none; padding: 10px 9px 0; color: #fff; border-bottom: 1px solid #3b3b3b; }
.props-body { flex: 1; display: flex; justify-content: space-between; border-top: 1px solid #606060; border-bottom: 1px solid #3b3b3b; }
.pscroll { width: 15px; flex: none; background: linear-gradient(90deg, #404040, #4a4a4a); }
.props-foot { height: 19px; flex: none; display: flex; justify-content: flex-end; align-items: center; gap: 19px; border-top: 1px solid #606060; }

.layers { height: 276px; flex: none; }
.lrow { height: 28px; flex: none; display: flex; align-items: center; padding: 0 15px 0 4px; border-bottom: 1px solid #3f3f3f; border-top: 1px solid #606060; color: #bbb; white-space: nowrap; }
.lrow .drop { color: #bbb; background: #585858; box-shadow: inset 0 1px #666; }
.kind { width: 71px; }
.drop.kind select { padding-left: 21px; }
.filters { display: flex; margin-left: 15px; }
.filters button { width: 24px; height: 20px; }
.filters .tf { font: bold 15px "Liberation Serif", serif; color: #8a8a8a; }
.toggle { width: 9px; height: 17px; margin-left: auto; border: 1px solid #3b3b3b; background: linear-gradient(#757575 50%, #444 50%); }
.blend { width: 111px; }
.push { margin: 0 6px 0 auto; }
.pct { display: flex; width: 56px; height: 19px; flex: none; }
.pct input { flex: 1; min-width: 0; padding-left: 3px; color: #777; background: #4c4c4c; border: 1px solid #424242; }
.pct button { width: 20px; background: #5c5c5c; border: 1px solid #444; }
.lock { width: 34px; padding-left: 2px; flex: none; }
.locks { display: flex; }
.locks button { width: 22px; height: 20px; }
.list { flex: 1; min-height: 0; display: flex; border-top: 1px solid #3a3a3a; background: #464646; }
.items { flex: 1; min-width: 0; }
.layer { display: flex; height: 40px; border-bottom: 1px solid #383838; background: #535353; }
.eye { width: 31px; border-right: 1px solid #383838; }
.layer-main { flex: 1; display: flex; align-items: center; padding: 0 16px 0 3px; background: #596678; }
.thumb { width: 24px; height: 32px; background: #fff; border: 1px solid #181818; }
.name { margin: 0 auto 0 12px; font-style: italic; color: #fff; }
.lfoot { height: 19px; flex: none; display: flex; justify-content: flex-end; align-items: center; padding-right: 21px; border-top: 1px solid #666; }
.lfoot button { width: 27px; height: 18px; }
.lfoot .fx { font: italic 15px "Liberation Serif", serif; color: #999; }

.mark { position: absolute; right: 9px; bottom: 20px; display: flex; align-items: center; gap: 5px; pointer-events: none; }
.php { width: 41px; height: 22px; border-radius: 50%; background: linear-gradient(#d86868, #c03030); color: #eee; font: italic 16px/19px "Open Sans", sans-serif; text-align: center; }
.cn { font-size: 14px; color: #333; }
```
FILE: rulers.js
```js
const NS = 'http://www.w3.org/2000/svg';
const STEP = 33.37;

function add(parent, tag, attrs, text) {
  const el = document.createElementNS(NS, tag);
  for (const key in attrs) el.setAttribute(key, attrs[key]);
  if (text !== undefined) el.textContent = text;
  parent.append(el);
  return el;
}

function drawRuler(svg, origin, from, to, vertical, cursor) {
  const line = (p, start, cls) => {
    const q = Math.round(p) + 0.5;
    add(svg, 'line', vertical
      ? { x1: start, x2: 17, y1: q, y2: q, class: cls }
      : { y1: start, y2: 17, x1: q, x2: q, class: cls });
  };
  for (let i = from; i <= to; i++) {
    const p = origin + i * STEP;
    line(p, 0, 'tick');
    for (let k = 1; k < 5; k++) line(p + k * STEP / 5, k % 2 ? 14 : 13, 'tick');
    const label = String(Math.abs(i * 50));
    if (vertical) {
      const stack = add(svg, 'text', {});
      [...label].forEach((digit, n) => {
        const y = Math.round(p) + 11 + n * 10;
        if (y > 0) add(stack, 'tspan', { x: 4, y }, digit);
      });
    } else {
      add(svg, 'text', { x: Math.round(p) + 4, y: 11 }, label);
    }
  }
  line(cursor, 0, 'here');
  add(svg, 'line', vertical ? { x1: 16.5, x2: 16.5, y1: 0, y2: 2000 } : { x1: 0, x2: 2000, y1: 16.5, y2: 16.5 });
}

function draw() {
  const x = document.getElementById('rulerX');
  const y = document.getElementById('rulerY');
  x.replaceChildren();
  y.replaceChildren();
  const page = document.querySelector('.page').getBoundingClientRect();
  const ox = page.left - x.getBoundingClientRect().left;
  const oy = page.top - y.getBoundingClientRect().top;
  drawRuler(x, ox, -Math.ceil(ox / STEP), Math.floor((x.clientWidth - ox) / STEP), false, ox + 358);
  drawRuler(y, oy, -Math.ceil(oy / STEP), Math.floor((y.clientHeight - oy) / STEP), true, oy + 56);
}
draw();
addEventListener('resize', draw);
```
